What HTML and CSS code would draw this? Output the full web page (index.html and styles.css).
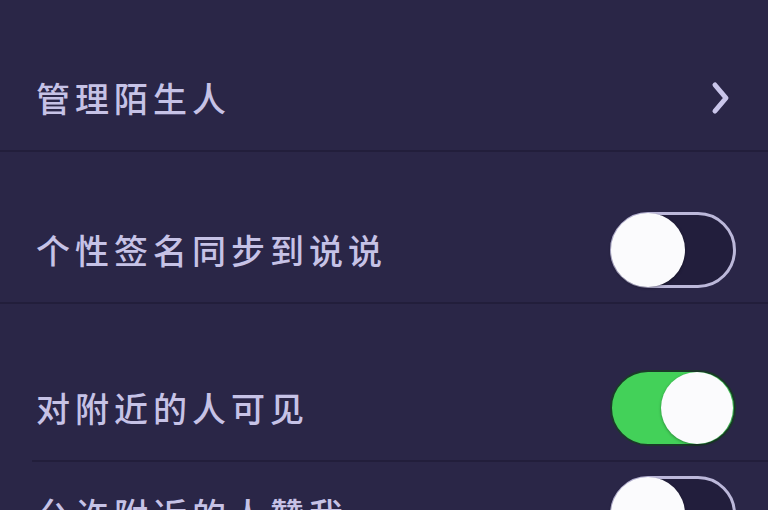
FILE: index.html
```html
<!DOCTYPE html>
<html lang="zh-CN">
<head>
<meta charset="utf-8">
<title>设置</title>
<link rel="stylesheet" href="styles.css">
</head>
<body>
<div class="page">
  <section class="group first">
    <div class="row">
      <span class="label">管理陌生人</span>
      <svg class="chevron" width="22" height="34" viewBox="0 0 22 34"><path d="M5 4 L16 17 L5 30" fill="none" stroke="#c9c5ea" stroke-width="5" stroke-linecap="round" stroke-linejoin="round"/></svg>
    </div>
  </section>
  <section class="group second">
    <div class="row">
      <span class="label">个性签名同步到说说</span>
      <span class="toggle off"><span class="knob"></span></span>
    </div>
  </section>
  <section class="group third">
    <div class="row inset">
      <span class="label">对附近的人可见</span>
      <span class="toggle on"><span class="knob"></span></span>
    </div>
    <div class="row">
      <span class="label">允许附近的人赞我</span>
      <span class="toggle off"><span class="knob"></span></span>
    </div>
  </section>
</div>
</body>
</html>
```

FILE: styles.css
```css
html, body {
  margin: 0;
  padding: 0;
  background: #2a2647;
}
body {
  width: 768px;
  height: 510px;
  overflow: hidden;
  font-family: "Noto Sans CJK SC", "Noto Sans", sans-serif;
}
.page {
  display: flex;
  flex-direction: column;
  padding-top: 46px;
}
.group {
  display: flex;
  flex-direction: column;
  border-bottom: 2px solid #221e3b;
}
.group.second {
  margin-top: 46px;
}
.group.third {
  margin-top: 52px;
}
.row {
  height: 104px;
  display: flex;
  align-items: center;
  justify-content: space-between;
  padding: 0 32px 0 36px;
}
.row.inset {
  border-bottom: 2px solid #221e3b;
  margin-left: 32px;
  padding-left: 4px;
}
.label {
  color: #c6c2e6;
  font-size: 34px;
  font-weight: 500;
  letter-spacing: 5px;
  line-height: 1;
}
.chevron {
  margin-right: 4px;
}
.toggle {
  width: 126px;
  height: 76px;
  border-radius: 38px;
  box-sizing: border-box;
  display: flex;
  align-items: center;
}
.toggle.off {
  border: 3px solid #bcb8da;
  background: #221e3c;
  justify-content: flex-start;
}
.toggle.on {
  background: #43d159;
  border: 2px solid #1b3a2a;
  justify-content: flex-end;
  padding-right: 1px;
}
.knob {
  width: 72px;
  height: 72px;
  border-radius: 50%;
  background: #fbfbfd;
  box-shadow: 0 1px 3px rgba(0,0,0,0.35);
}
.toggle.off .knob {
  margin-left: -2px;
  width: 74px;
  height: 74px;
}
```
